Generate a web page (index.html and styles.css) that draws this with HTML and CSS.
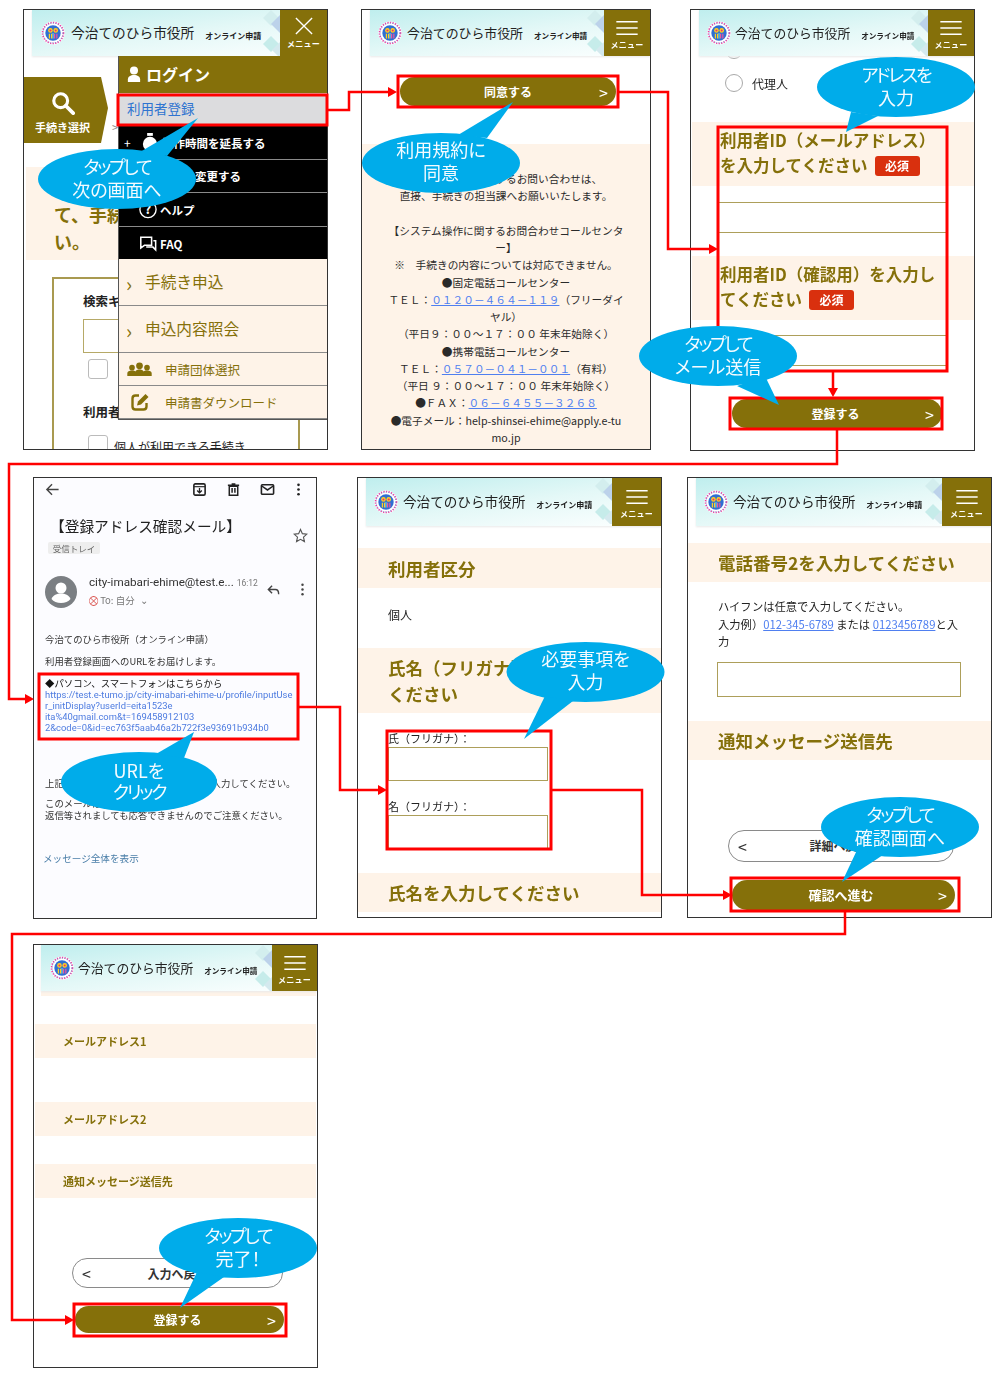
FILE: index.html
```html
<!DOCTYPE html>
<html lang="ja">
<head>
<meta charset="utf-8">
<title>利用者登録の流れ</title>
<link rel="stylesheet" href="styles.css">
</head>
<body>
<svg class="defs" width="0" height="0" aria-hidden="true">
  <defs>
    <symbol id="logo" viewBox="0 0 30 30">
      <circle cx="15" cy="15" r="14.5" fill="#fff"/>
      <circle cx="15" cy="15" r="13" fill="none" stroke="#ee3fa0" stroke-width="2.2" stroke-dasharray="1.6 1.6"/>
      <circle cx="15" cy="15" r="12.4" fill="none" stroke="#49b8e8" stroke-width="1" stroke-dasharray="1.2 2"/>
      <circle cx="15" cy="15" r="9.6" fill="#2f6fd3"/>
      <circle cx="11.8" cy="11.8" r="2.9" fill="#ffd21f"/>
      <circle cx="18.4" cy="11.8" r="2.9" fill="#ffd21f"/>
      <circle cx="11.8" cy="11.8" r="1.3" fill="#ea2f7d"/>
      <circle cx="18.4" cy="11.8" r="1.3" fill="#ea2f7d"/>
      <path d="M10.5 16v6M13.2 16v6" stroke="#ffd21f" stroke-width="1.5"/>
      <path d="M17 16v6M19.8 16v6" stroke="#f0559c" stroke-width="1.5"/>
      <path d="M15 15v7" stroke="#7fe0e0" stroke-width="1.2"/>
    </symbol>
    <symbol id="diamonds" viewBox="0 0 20 46">
      <path d="M11 0l8 8-8 8-8-8z" fill="#d3eeee"/>
      <path d="M20 5l9 9-9 9-9-9z" fill="#bcd2ea"/>
      <path d="M11 26l8 8-8 8-8-8z" fill="#c6ecea"/>
      <path d="M20 32l8 8-8 8-8-8z" fill="#d4e9ee"/>
    </symbol>
    <symbol id="burger" viewBox="0 0 26 18">
      <path d="M1 2h24M1 9h24M1 16h24" stroke="#fff" stroke-width="1.6" fill="none"/>
    </symbol>
  </defs>
</svg>

<main class="canvas">

  <!-- Screen 1 -->
  <section class="phone p1">
    <header class="app-header">
      <div class="brand">
        <svg class="logo"><use href="#logo"/></svg>
        <span class="brand-name">今治てのひら市役所</span>
        <span class="brand-sub">オンライン申請</span>
        <svg class="diamonds"><use href="#diamonds"/></svg>
      </div>
      <div class="menu-btn">
        <svg class="menu-x" viewBox="0 0 20 20"><path d="M1 1l18 18M19 1L1 19" stroke="#fff" stroke-width="1.5" fill="none"/></svg>
        <span class="menu-label">メニュー</span>
      </div>
    </header>
    <div class="step-row">
      <div class="step-tab">
        <svg class="search-ico" viewBox="0 0 26 26"><circle cx="10.5" cy="10.5" r="7.5" fill="none" stroke="#fff" stroke-width="3.4"/><path d="M16 16l8 8" stroke="#fff" stroke-width="4" stroke-linecap="round"/></svg>
        <span class="step-label">手続き選択</span>
      </div>
      <span class="step-next">&gt;</span>
    </div>
    <div class="band band-search">て、手続きを選択してくださ<br>い。</div>
    <div class="search-box">
      <div class="box-label">検索キーワード</div>
      <div class="box-input"></div>
      <div class="check"></div>
      <div class="box-label box-label2">利用者区分</div>
      <div class="check-row"><div class="check"></div><span class="check-text">個人が利用できる手続き</span></div>
    </div>
    <nav class="side-menu">
      <div class="menu-login">
        <svg class="user-ico" viewBox="0 0 16 18"><circle cx="8" cy="5" r="4.6" fill="#fff"/><path d="M1 18v-3c0-3 3-5 7-5s7 2 7 5v3z" fill="#fff"/></svg>
        <span>ログイン</span>
      </div>
      <div class="menu-reg">利用者登録</div>
      <div class="menu-dark menu-dark-1">
        <span class="plus">+</span>
        <svg class="dark-ico" viewBox="0 0 18 20"><circle cx="9" cy="11.5" r="7.5" fill="#fff"/><rect x="6" y="0" width="6" height="3" fill="#fff"/></svg>
        <span>操作時間を延長する</span>
      </div>
      <div class="menu-dark menu-dark-2"><span>パスワードを変更する</span></div>
      <div class="menu-dark menu-dark-3">
        <svg class="dark-ico" viewBox="0 0 20 20"><circle cx="10" cy="10" r="9" fill="none" stroke="#fff" stroke-width="1.5"/><text class="q-mark" x="10" y="15" text-anchor="middle">?</text></svg>
        <span>ヘルプ</span>
      </div>
      <div class="menu-dark menu-dark-4">
        <svg class="dark-ico" viewBox="0 0 20 20"><path d="M2 3h12v9H6l-4 3zM16 7h2.500v10l-3-3H8" fill="none" stroke="#fff" stroke-width="1.7"/></svg>
        <span>FAQ</span>
      </div>
      <div class="menu-light menu-big"><span class="chev">›</span><span>手続き申込</span></div>
      <div class="menu-light menu-big"><span class="chev">›</span><span>申込内容照会</span></div>
      <div class="menu-light menu-small">
        <svg class="group-ico" viewBox="0 0 26 16"><circle cx="13" cy="4" r="3.6" fill="#85700a"/><circle cx="5" cy="6" r="3" fill="#85700a"/><circle cx="21" cy="6" r="3" fill="#85700a"/><path d="M0 15v-3c0-2 2-3 5-3 2 0 3 .5 3.500 1C9.500 8.500 11 8 13 8s3.500.5 4.500 2c.5-.5 1.500-1 3.500-1 3 0 5 1 5 3v3z" fill="#85700a"/></svg>
        <span>申請団体選択</span>
      </div>
      <div class="menu-light menu-small">
        <svg class="doc-ico" viewBox="0 0 18 18"><path d="M8 2.500H4.500C2.800 2.500 1.500 3.800 1.500 5.500v8c0 1.700 1.300 3 3 3h8c1.700 0 3-1.300 3-3V10" fill="none" stroke="#85700a" stroke-width="2.400"/><path d="M6 12.500l1-4L14.500 1 17.500 4 10 11.500z" fill="#85700a"/></svg>
        <span>申請書ダウンロード</span>
      </div>
    </nav>
  </section>

  <!-- Screen 2 -->
  <section class="phone p2">
    <header class="app-header">
      <div class="brand">
        <svg class="logo"><use href="#logo"/></svg>
        <span class="brand-name">今治てのひら市役所</span>
        <span class="brand-sub">オンライン申請</span>
        <svg class="diamonds"><use href="#diamonds"/></svg>
      </div>
      <div class="menu-btn"><svg class="burger"><use href="#burger"/></svg><span class="menu-label">メニュー</span></div>
    </header>
    <div class="cta cta-agree"><span>同意する</span><span class="cta-arrow">&gt;</span></div>
    <div class="contact">
      <p>手続きの内容に関するお問い合わせは、</p>
      <p>直接、手続きの担当課へお願いいたします。</p>
      <p>&nbsp;</p>
      <p>【システム操作に関するお問合わせコールセンタ</p>
      <p>ー】</p>
      <p>※　手続きの内容については対応できません。</p>
      <p>●固定電話コールセンター</p>
      <p>ＴＥＬ：<a class="tel">０１２０－４６４－１１９</a>（フリーダイ</p>
      <p>ヤル）</p>
      <p>（平日９：００～１７：００ 年末年始除く）</p>
      <p>●携帯電話コールセンター</p>
      <p>ＴＥＬ：<a class="tel">０５７０－０４１－００１</a>（有料）</p>
      <p>（平日 ９：００～１７：００ 年末年始除く）</p>
      <p>●ＦＡＸ：<a class="tel">０６－６４５５－３２６８</a></p>
      <p>●電子メール：help-shinsei-ehime@apply.e-tu</p>
      <p>mo.jp</p>
    </div>
  </section>

  <!-- Screen 3 -->
  <section class="phone p3">
    <header class="app-header">
      <div class="brand">
        <svg class="logo"><use href="#logo"/></svg>
        <span class="brand-name">今治てのひら市役所</span>
        <span class="brand-sub">オンライン申請</span>
        <svg class="diamonds"><use href="#diamonds"/></svg>
      </div>
      <div class="menu-btn"><svg class="burger"><use href="#burger"/></svg><span class="menu-label">メニュー</span></div>
    </header>
    <div class="radio radio-peek"></div>
    <div class="radio-row"><div class="radio"></div><span>代理人</span></div>
    <div class="band band-id">利用者ID（メールアドレス）<br>を入力してください<span class="badge">必須</span></div>
    <div class="input input-id"></div>
    <div class="band band-id band-id2">利用者ID（確認用）を入力し<br>てください<span class="badge">必須</span></div>
    <div class="input input-id input-id2"></div>
    <div class="cta cta-register"><span>登録する</span><span class="cta-arrow">&gt;</span></div>
  </section>

  <!-- Screen 4: mail -->
  <section class="phone p4">
    <div class="mail-bar">
      <svg class="mail-ico" viewBox="0 0 16 16"><path d="M14.500 8H2.500M7.500 2.500L2 8l5.500 5.500" fill="none" stroke="#444" stroke-width="1.500"/></svg>
      <span class="spacer"></span>
      <svg class="mail-ico" viewBox="0 0 16 16"><rect x="2" y="2" width="12" height="12" rx="1.500" fill="none" stroke="#222" stroke-width="1.700"/><path d="M2 5h12" stroke="#222" stroke-width="1.200"/><path d="M8 6.500v4.500M5.500 9L8 11.500 10.500 9" fill="none" stroke="#222" stroke-width="1.400"/></svg>
      <svg class="mail-ico" viewBox="0 0 16 16"><path d="M3.500 4.500v9.500h9V4.500zM2 3.500h12M6 2h4M6.500 6.500v5M9.500 6.500v5" fill="none" stroke="#222" stroke-width="1.600"/></svg>
      <svg class="mail-ico" viewBox="0 0 16 16"><rect x="1.500" y="3" width="13" height="10" rx="1" fill="none" stroke="#222" stroke-width="1.700"/><path d="M1.500 4L8 8.500 14.500 4" fill="none" stroke="#222" stroke-width="1.600"/></svg>
      <svg class="mail-ico mail-ico-dots" viewBox="0 0 16 16"><circle cx="8" cy="3" r="1.400" fill="#222"/><circle cx="8" cy="8" r="1.400" fill="#222"/><circle cx="8" cy="13" r="1.400" fill="#222"/></svg>
    </div>
    <div class="mail-head">
      <div>
        <h1 class="mail-subject">【登録アドレス確認メール】</h1>
        <span class="mail-chip">受信トレイ</span>
      </div>
      <svg class="mail-star" viewBox="0 0 16 16"><path d="M8 1.500l2 4.500 4.800.5-3.600 3.200 1 4.800L8 12.100l-4.200 2.400 1-4.800L1.200 6.500 6 6z" fill="none" stroke="#555" stroke-width="1.200"/></svg>
    </div>
    <div class="mail-sender">
      <svg class="avatar" viewBox="0 0 32 32"><circle cx="16" cy="16" r="16" fill="#7b7f83"/><circle cx="16" cy="12" r="5.500" fill="#fff"/><path d="M6.500 23c1.500-4 5.500-5.500 9.500-5.500s8 1.500 9.500 5.500c-2 2.500-5.500 4-9.500 4s-7.500-1.500-9.500-4z" fill="#fff"/></svg>
      <div class="sender-text">
        <div class="sender-name">city-imabari-ehime@test.e... <span class="sender-time">16:12</span></div>
        <div class="sender-to"><span class="to-mark">⛒</span> To: 自分 <span class="to-chev">⌄</span></div>
      </div>
      <svg class="reply-ico" viewBox="0 0 16 16"><path d="M6.500 4L2.500 8l4 4M3 8h7c2.500 0 3.500 1.500 3.500 5" fill="none" stroke="#444" stroke-width="1.500"/></svg>
      <svg class="more-ico" viewBox="0 0 16 16"><circle cx="8" cy="3" r="1.300" fill="#444"/><circle cx="8" cy="8" r="1.300" fill="#444"/><circle cx="8" cy="13" r="1.300" fill="#444"/></svg>
    </div>
    <p class="mail-line mail-first">今治てのひら市役所（オンライン申請）</p>
    <p class="mail-line mail-gap">利用者登録画面へのURLをお届けします。</p>
    <div class="mail-gap">
      <p class="mail-line mail-strong">◆パソコン、スマートフォンはこちらから</p>
      <p class="mail-line mail-link">https://test.e-tumo.jp/city-imabari-ehime-u/profile/inputUse</p>
      <p class="mail-line mail-link">r_initDisplay?userId=eita1523e</p>
      <p class="mail-line mail-link">ita%40gmail.com&amp;t=169458912103</p>
      <p class="mail-line mail-link">2&amp;code=0&amp;id=ec763f5aab46a2b722f3e93691b934b0</p>
    </div>
    <p class="mail-line mail-after">上記のURLにアクセスして、必要事項を入力してください。</p>
    <div class="mail-note">
      <p class="mail-line">このメールは送信専用です。</p>
      <p class="mail-line">返信等されましても応答できませんのでご注意ください。</p>
    </div>
    <p class="mail-more">メッセージ全体を表示</p>
  </section>

  <!-- Screen 5 -->
  <section class="phone p5">
    <header class="app-header">
      <div class="brand">
        <svg class="logo"><use href="#logo"/></svg>
        <span class="brand-name">今治てのひら市役所</span>
        <span class="brand-sub">オンライン申請</span>
        <svg class="diamonds"><use href="#diamonds"/></svg>
      </div>
      <div class="menu-btn"><svg class="burger"><use href="#burger"/></svg><span class="menu-label">メニュー</span></div>
    </header>
    <div class="band band-form band-user">利用者区分</div>
    <p class="plain-value">個人</p>
    <div class="band band-form band-double">氏名（フリガナ）を入力して<br>ください</div>
    <label class="field-label field-first">氏（フリガナ）：</label>
    <div class="input input-kana"></div>
    <label class="field-label">名（フリガナ）：</label>
    <div class="input input-kana"></div>
    <div class="band band-form band-last">氏名を入力してください</div>
  </section>

  <!-- Screen 6 -->
  <section class="phone p6">
    <header class="app-header">
      <div class="brand">
        <svg class="logo"><use href="#logo"/></svg>
        <span class="brand-name">今治てのひら市役所</span>
        <span class="brand-sub">オンライン申請</span>
        <svg class="diamonds"><use href="#diamonds"/></svg>
      </div>
      <div class="menu-btn"><svg class="burger"><use href="#burger"/></svg><span class="menu-label">メニュー</span></div>
    </header>
    <div class="band band-form band-tel">電話番号2を入力してください</div>
    <p class="tel-help">ハイフンは任意で入力してください。<br>入力例）<a class="tel-link">012-345-6789</a> または <a class="tel-link">0123456789</a>と入<br>力</p>
    <div class="input input-tel"></div>
    <div class="band band-form band-notify">通知メッセージ送信先</div>
    <div class="back back-detail"><span class="back-arrow">&lt;</span><span>詳細へ戻る</span></div>
    <div class="cta cta-confirm"><span>確認へ進む</span><span class="cta-arrow">&gt;</span></div>
  </section>

  <!-- Screen 7 -->
  <section class="phone p7">
    <header class="app-header">
      <div class="brand">
        <svg class="logo"><use href="#logo"/></svg>
        <span class="brand-name">今治てのひら市役所</span>
        <span class="brand-sub">オンライン申請</span>
        <svg class="diamonds"><use href="#diamonds"/></svg>
      </div>
      <div class="menu-btn"><svg class="burger"><use href="#burger"/></svg><span class="menu-label">メニュー</span></div>
    </header>
    <div class="strip"></div>
    <div class="band band-small band-s1">メールアドレス1</div>
    <div class="band band-small band-s2">メールアドレス2</div>
    <div class="band band-small band-s3">通知メッセージ送信先</div>
    <div class="back back-input"><span class="back-arrow">&lt;</span><span>入力へ戻る</span></div>
    <div class="cta cta-finish"><span>登録する</span><span class="cta-arrow">&gt;</span></div>
  </section>

  <!-- Annotations -->
  <svg class="notes" viewBox="0 0 1000 1380" width="1000" height="1380">
    <g class="red-box">
      <rect x="118" y="95" width="209" height="30"/>
      <rect x="398" y="76" width="220" height="31"/>
      <rect x="718" y="127" width="229" height="244"/>
      <rect x="730" y="398" width="212" height="31"/>
      <rect x="39" y="674" width="259" height="65"/>
      <rect x="387" y="731" width="164" height="118"/>
      <rect x="731" y="878" width="228" height="33"/>
      <rect x="74" y="1304" width="212" height="32"/>
    </g>
    <g class="red-line">
      <path d="M328 110H349V92H390"/>
      <path d="M619 92H668V249H710"/>
      <path d="M833 372V390"/>
      <path d="M837 430V464H9V699H27"/>
      <path d="M299 707H340V790H380"/>
      <path d="M552 790H642V895H725"/>
      <path d="M845 912V934H12V1320H66"/>
    </g>
    <g class="red-head">
      <path d="M397 92l-9-5v10z"/>
      <path d="M718 249l-9-5v10z"/>
      <path d="M833 397l-5-9h10z"/>
      <path d="M34 699l-9-5v10z"/>
      <path d="M387 790l-9-5v10z"/>
      <path d="M732 895l-9-5v10z"/>
      <path d="M74 1320l-9-5v10z"/>
    </g>
    <g class="bubble">
      <ellipse cx="117" cy="179" rx="79" ry="30"/><path d="M140 152L198 118L167 156z"/>
      <ellipse cx="441" cy="163" rx="79" ry="30"/><path d="M458 135L513 102L487 138z"/>
      <ellipse cx="896" cy="87" rx="79" ry="30"/><path d="M851 112L846 132L878 116z"/>
      <ellipse cx="718" cy="356" rx="79" ry="30"/><path d="M737 386L779 405L765 376z"/>
      <ellipse cx="139" cy="782" rx="78" ry="30"/><path d="M156 754L194 732L184 758z"/>
      <ellipse cx="585.500" cy="672" rx="79" ry="30"/><path d="M545 696L524 739L573 701z"/>
      <ellipse cx="900" cy="827" rx="79" ry="30"/><path d="M857 850L842 882L883 855z"/>
      <ellipse cx="238" cy="1248" rx="79" ry="30"/><path d="M197 1272L180 1308L224 1277z"/>
    </g>
    <g class="bubble-text">
      <text class="kana" x="117" y="174">タップして</text><text x="117" y="197">次の画面へ</text>
      <text x="441" y="157">利用規約に</text><text x="441" y="180">同意</text>
      <text class="kana" x="896" y="82">アドレスを</text><text x="896" y="105">入力</text>
      <text class="kana" x="718" y="351">タップして</text><text x="718" y="374">メール送信</text>
      <text x="139" y="778">URLを</text><text class="kana" x="139" y="799">クリック</text>
      <text x="585.500" y="666">必要事項を</text><text x="585.500" y="689">入力</text>
      <text class="kana" x="900" y="822">タップして</text><text x="900" y="845">確認画面へ</text>
      <text class="kana" x="238" y="1243">タップして</text><text x="238" y="1266">完了！</text>
    </g>
  </svg>
</main>
</body>
</html>
```
FILE: styles.css
```css
* { box-sizing: border-box; }
html, body { margin: 0; padding: 0; background: #fff; }
body { font-family: "Noto Sans CJK JP", "Noto Sans", sans-serif; color: #222; overflow: hidden; }
p, h1 { margin: 0; }
.defs { position: absolute; }

.canvas { position: relative; width: 1000px; height: 1380px; overflow: hidden; filter: blur(.35px); }
.phone { position: absolute; background: #fff; border: 1px solid #333; overflow: hidden; --brand-size: 12.900px; --sub-size: 7.600px; --brand-gap: 5px; }
.p1 { left: 23px; top: 9px; width: 305px; height: 441px; --brand-size: 13.700px; --sub-size: 8px; --brand-gap: 6px; }
.p2 { left: 361px; top: 9px; width: 290px; height: 441px; }
.p3 { left: 690px; top: 9px; width: 285px; height: 442px; --brand-size: 12.800px; --brand-gap: 4px; }
.p4 { left: 33px; top: 477px; width: 284px; height: 442px; background: #fcfcff; }
.p5 { left: 357px; top: 477px; width: 305px; height: 441px; --brand-size: 13.600px; --sub-size: 8px; }
.p6 { left: 687px; top: 477px; width: 305px; height: 441px; --brand-size: 13.600px; --sub-size: 8px; }
.p7 { left: 33px; top: 944px; width: 285px; height: 424px; --brand-size: 12.800px; --brand-gap: 4px; }

/* Shared header */
.app-header { position: relative; z-index: 1; display: flex; height: 46px; margin-left: 8px; background: #fff; box-shadow: 0 1px 2px #e9e9e9; }
.brand { position: relative; flex: 1; display: flex; align-items: center; padding-left: 9px; overflow: hidden; background: linear-gradient(172deg, #bfeeee 0%, #e4f8f7 55%, #f9fefe 100%); }
.logo { width: 24px; height: 24px; flex: none; }
.brand-name { margin: 0 0 2px var(--brand-gap); font-size: var(--brand-size); color: #222; white-space: nowrap; }
.brand-sub { margin-left: 11px; margin-top: 5px; font-size: var(--sub-size); font-weight: 700; color: #222; white-space: nowrap; }
.diamonds { position: absolute; right: 0; top: 0; width: 20px; height: 46px; }
.menu-btn { flex: none; width: 47px; display: flex; flex-direction: column; align-items: center; justify-content: flex-start; padding-top: 10px; background: #85700a; }
.burger { width: 24px; height: 16px; }
.menu-x { width: 18px; height: 18px; margin-top: -3px; }
.menu-label { margin-top: 4px; font-size: 8px; font-weight: 700; color: #fff; letter-spacing: .3px; line-height: 10px; }
.p3 .menu-btn, .p2 .menu-btn { width: 46px; }
.p5 .app-header, .p6 .app-header { height: 48px; }
.p5 .menu-btn, .p6 .menu-btn { width: 49px; padding-top: 11px; }
.p5 .burger, .p6 .burger { width: 26px; }
.p2 .brand, .p3 .brand, .p5 .brand, .p6 .brand { padding-left: 8px; }
.p7 .app-header { margin-left: 7px; }
.p7 .menu-btn { width: 45px; }

/* Buttons */
.cta { display: flex; align-items: center; justify-content: center; position: relative; background: #85700a; color: #fff; font-size: 12px; font-weight: 700; border-radius: 15px; }
.cta-arrow { position: absolute; right: 8px; top: 50%; transform: translateY(-50%); font-size: 16px; font-weight: 400; }
.cta-agree { margin: 21px 0 0 38px; width: 216px; height: 29px; }
.cta-register { margin: 33px 0 0 41px; width: 210px; height: 29px; padding-right: 3px; }
.cta-confirm { margin: 18px 0 0 44px; width: 223px; height: 30px; padding-right: 5px; font-size: 13px; }
.cta-finish { margin: 18px 0 0 41px; width: 209px; height: 27px; padding-right: 4px; }
.back { position: relative; display: flex; align-items: center; justify-content: center; border: 1px solid #8a8a8a; border-radius: 16px; background: #fff; font-size: 12px; font-weight: 700; color: #333; }
.back-arrow { position: absolute; left: 9px; font-size: 16px; font-weight: 400; }
.back-detail { margin: 70px 0 0 40px; width: 226px; height: 32px; padding-right: 3px; }
.back-input { margin: 60px 0 0 38px; width: 211px; height: 30px; }

/* Bands */
.band { background: #fef3e8; color: #85700a; font-weight: 700; white-space: nowrap; }
.band-form { font-size: 17.500px; padding-left: 30px; display: flex; align-items: center; }
.band-user { margin-top: 22px; height: 40px; }
.band-double { margin-top: 23px; height: 65px; display: block; line-height: 26px; padding-top: 7px; }
.band-last { margin-top: 24px; height: 39px; }
.band-tel { margin-top: 17px; height: 39px; }
.band-notify { margin-top: 24px; height: 39px; }

.input { border: 1.500px solid #ad9f5a; background: #fff; }

/* Screen 1 */
.step-row { display: flex; align-items: flex-start; margin-top: 21px; height: 66px; }
.step-tab { width: 84px; height: 66px; background: #85700a; display: flex; flex-direction: column; align-items: center; clip-path: polygon(0 0, 77px 0, 84px 31px, 77px 66px, 0 66px); padding: 14px 7px 0 0; }
.search-ico { width: 24px; height: 24px; }
.step-label { margin-top: 4px; font-size: 11px; font-weight: 700; color: #fff; white-space: nowrap; }
.step-next { margin: 42px 0 0 4px; font-size: 11px; color: #888; }
.band-search { margin: 24px 0 0 2px; height: 93px; padding: 34px 0 0 28px; font-size: 18px; line-height: 27px; }
.search-box { margin: 17px 0 0 28px; width: 248px; height: 200px; border: 2px solid #a99a50; border-bottom: 0; padding: 13px 0 0 29px; }
.box-label { font-size: 12.500px; font-weight: 700; line-height: 18px; white-space: nowrap; }
.box-label2 { margin-top: 24px; }
.box-input { margin-top: 9px; height: 34px; border: 1.500px solid #b6a967; }
.check { width: 20px; height: 20px; margin: 6px 0 0 5px; border: 1px solid #bbb; border-radius: 3px; }
.check-row { display: flex; align-items: flex-start; }
.check-row .check { margin-top: 14px; }
.check-text { margin: 17px 0 0 6px; font-size: 12px; white-space: nowrap; }

.side-menu { position: absolute; z-index: 2; left: 94px; top: 46px; width: 210px; height: 364px; border: 1px solid #555; border-top: 0; background: #fef3e8; display: flex; flex-direction: column; }
.menu-login { height: 37px; flex: none; background: #85700a; color: #fff; display: flex; align-items: center; padding: 0 0 2px 8px; font-size: 16px; font-weight: 700; gap: 5px; }
.user-ico { width: 14px; height: 16px; }
.menu-reg { height: 33px; flex: none; background: #dcdcde; color: #2f74d0; font-size: 13.500px; display: flex; align-items: center; padding: 0 0 3px 8px; }
.menu-dark { flex: none; background: #000; color: #fff; font-size: 11.500px; font-weight: 700; display: flex; align-items: center; padding-left: 20px; border-bottom: 1px solid #8a8a8a; white-space: nowrap; }
.plus { width: 17px; font-size: 12px; font-weight: 400; }
.dark-ico { width: 18px; height: 19px; margin-right: 3px; }
.menu-dark-1 { height: 34px; padding-left: 5px; }
.menu-dark-2 { height: 33px; padding-left: 7px; }
.menu-dark-3 { height: 34px; }
.menu-dark-4 { height: 32px; border-bottom: 0; padding-top: 1px; }
.q-mark { font-size: 14px; font-weight: 700; fill: #fff; }
.menu-light { background: #fef3e8; color: #85700a; display: flex; align-items: center; border-bottom: 1px solid #8a8a8a; white-space: nowrap; flex: none; }
.menu-big { height: 47px; padding-bottom: 2px; font-size: 15.700px; }
.chev { width: 26px; padding: 5px 0 0 7px; font-size: 20px; line-height: 20px; }
.menu-small { height: 33px; font-size: 12.500px; padding-left: 8px; }
.group-ico { width: 25px; height: 15px; margin-right: 13px; }
.doc-ico { width: 18px; height: 18px; margin: 0 16px 0 4px; }

/* Screen 2 */
.contact { margin: 38px 0 0 0; height: 306px; background: #fef3e8; padding-top: 26px; text-align: center; font-size: 10.700px; line-height: 17.250px; color: #2a2a2a; white-space: nowrap; }
.tel { color: #4f7ff0; text-decoration: underline; }

/* Screen 3 */
.radio { width: 18px; height: 18px; border: 1px solid #a8a8a8; border-radius: 50%; background: #fff; flex: none; }
.radio-peek { margin: -15px 0 0 34px; }
.radio-row { display: flex; align-items: center; gap: 9px; height: 18px; margin: 15px 0 0 34px; font-size: 12px; }
.band-id { margin: 30px 0 0 1px; height: 64px; padding: 6px 0 0 28px; font-size: 16.500px; line-height: 25px; }
.band-id2 { margin-top: 23px; }
.badge { display: inline-block; margin-left: 7px; width: 45px; height: 20px; line-height: 20px; vertical-align: 1px; text-align: center; background: #d9300e; color: #fff; font-size: 12px; font-weight: 700; border-radius: 3px; }
.input-id { margin: 16px 0 0 27px; width: 230px; height: 31px; }
.input-id2 { margin-top: 15px; }

/* Screen 4 */
.mail-bar { display: flex; align-items: center; height: 22px; padding: 0 10px 0 11px; }
.mail-ico { width: 15px; height: 15px; margin-left: 19px; }
.mail-ico:first-child { margin-left: 0; }
.mail-ico-dots { margin-left: 16px; }
.spacer { flex: 1; }
.mail-head { display: flex; align-items: center; justify-content: space-between; margin: 16px 0 0 14px; padding-right: 8px; }
.mail-subject { margin-left: 2px; font-size: 14.700px; font-weight: 400; line-height: 20px; white-space: nowrap; color: #222; }
.mail-chip { display: block; width: 52px; height: 12px; margin-top: 6px; background: #eeeeee; border-radius: 2px; font-size: 8.500px; line-height: 12px; text-align: center; color: #666; }
.mail-star { width: 15px; height: 15px; }
.mail-sender { display: flex; align-items: center; margin: 22px 0 0 11px; height: 32px; }
.avatar { width: 32px; height: 32px; flex: none; }
.sender-text { margin-left: 12px; width: 176px; flex: none; }
.sender-name { font-size: 11.700px; line-height: 16px; color: #333; white-space: nowrap; font-family: "Roboto", "Noto Sans CJK JP", sans-serif; }
.sender-time { font-size: 8.500px; color: #777; }
.sender-to { font-size: 9.500px; line-height: 18px; color: #777; white-space: nowrap; }
.to-mark { color: #d9534f; font-size: 9px; }
.to-chev { margin-left: 3px; }
.reply-ico { width: 15px; height: 15px; margin: 0 0 5px 1px; }
.more-ico { width: 15px; height: 15px; margin: 0 0 5px 14px; }
.mail-line { margin-left: 11px; font-size: 9.400px; line-height: 11px; color: #333; white-space: nowrap; }
.mail-first { margin-top: 26px; }
.mail-gap { margin-top: 11px; }
.mail-strong { color: #111; }
.mail-link { color: #4d7be0; font-family: "Roboto", "Noto Sans CJK JP", sans-serif; }
.mail-after { margin-top: 45px; }
.mail-note { margin-top: 8px; line-height: 12px; }
.mail-note .mail-line { line-height: 12px; }
.mail-more { margin: 31px 0 0 9px; font-size: 9.600px; line-height: 12px; color: #4a7ea8; }

/* Screen 5 */
.plain-value { margin: 17px 0 0 30px; font-size: 12px; line-height: 20px; }
.field-label { display: block; margin: 18px 0 0 30px; font-size: 11px; line-height: 14px; white-space: nowrap; }
.field-first { margin-top: 18px; }
.input-kana { margin: 2px 0 0 30px; width: 160px; height: 34px; }

/* Screen 6 */
.tel-help { margin: 16px 0 0 30px; font-size: 11.300px; line-height: 17.500px; white-space: nowrap; }
.tel-link { color: #4f7ff0; text-decoration: underline; }
.input-tel { margin: 11px 0 0 29px; width: 244px; height: 35px; }

/* Screen 7 */
.strip { height: 5px; margin: 0 1px 0 7px; background: #fef3e8; }
.band-small { margin: 0 1px; height: 34px; padding-left: 28px; display: flex; align-items: center; font-size: 11px; }
.band-s1 { margin-top: 28px; }
.band-s2 { margin-top: 44px; }
.band-s3 { margin-top: 28px; }

/* Annotations */
.notes { position: absolute; left: 0; top: 0; z-index: 5; }
.red-box rect { fill: none; stroke: #f00; stroke-width: 3; }
.red-line path { fill: none; stroke: #f00; stroke-width: 2.500; }
.red-head path { fill: #f00; }
.bubble { fill: #00acea; }
.bubble-text text { fill: #f4fbff; font-size: 18px; font-weight: 400; font-feature-settings: "palt"; text-anchor: middle; font-family: "Noto Sans CJK JP", sans-serif; }
.bubble-text .kana { letter-spacing: -2.200px; }
```
